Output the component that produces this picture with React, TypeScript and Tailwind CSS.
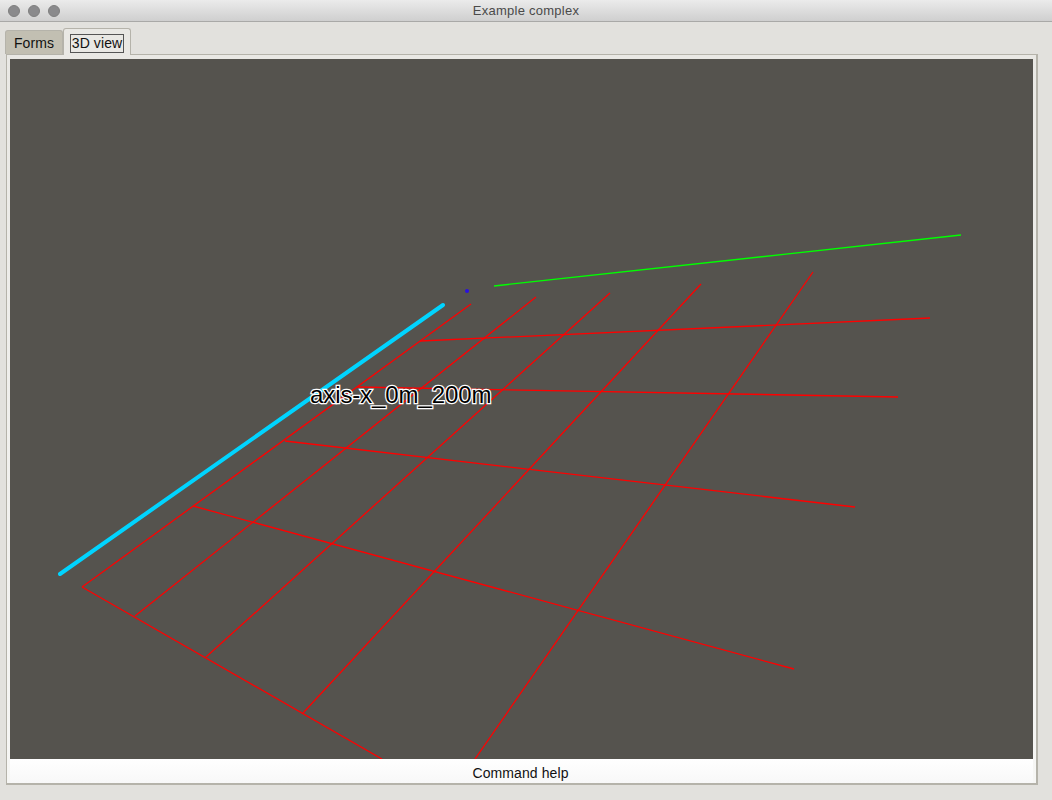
const redLines = [
  // long edges
  "M82 587 L471 304",
  "M135 616 L536 297",
  "M206 657 L610 293",
  "M303 713 L701 284",
  "M475 759 L813 272",
  // cross lines
  "M82 587 L382 759",
  "M193 506 L794 669",
  "M285 441 L855 507",
  "M357 387 L898 397",
  "M420 341 L930 318",
];

function TrafficLight() {
  return <span className="h-3 w-3 rounded-full border border-[#7f7f7f] bg-[#8a8a8c]" />;
}

function Scene() {
  return (
    <div className="relative h-[700px] bg-[#55534e]">
      <svg className="block h-full w-full" viewBox="10 59 1023 700" fill="none">
        {redLines.map((d) => (
          <path key={d} d={d} stroke="#ff0000" strokeWidth="1.3" />
        ))}
        <path d="M494 286 L961 235" stroke="#00ff00" strokeWidth="1.3" />
        <path d="M60 574 L443 305" stroke="#00d4ff" strokeWidth="4" strokeLinecap="round" />
        <circle cx="467" cy="291" r="2" fill="#2a10e0" />
      </svg>
      <span className="absolute left-[300px] top-[322px] font-['Liberation_Sans',Arial,sans-serif] text-[24px] leading-[28px] tracking-[-0.1px] text-black [-webkit-text-stroke:2.5px_white] [paint-order:stroke_fill]">
        axis-x_0m_200m
      </span>
    </div>
  );
}

export default function App() {
  return (
    <div className="flex h-[800px] w-[1052px] flex-col overflow-hidden bg-[#e2e1dd] font-['Liberation_Sans',Arial,sans-serif] text-[14px] tracking-[0.1px] text-[#111]">
      <header className="relative flex h-[22px] shrink-0 items-center border-b border-[#a9a9a7] bg-gradient-to-b from-[#ebebeb] to-[#cfcfcf] pl-2">
        <div className="flex gap-2">
          <TrafficLight />
          <TrafficLight />
          <TrafficLight />
        </div>
        <span className="absolute inset-x-0 text-center text-[13px] tracking-[0.25px] text-[#4a4a4a]">Example complex</span>
      </header>

      <div className="flex flex-1 flex-col px-[5px] pt-[6px]">
        <div className="relative z-10 flex h-[26px] items-end">
          <div className="flex h-[24px] w-[58px] items-center justify-center rounded-t-[3px] border border-b-0 border-[#b5b3aa] bg-[#c2bfb2] pt-[2px]">
            Forms
          </div>
          <div className="-mb-px flex h-[27px] w-[68px] items-center justify-center rounded-t-[3px] border border-b-0 border-[#b5b3aa] bg-[#e9e8e4] pt-[2px]">
            <span className="border border-[#555] px-px leading-[17px]">3D view</span>
          </div>
        </div>
        <div className="ml-px mr-[9px] flex h-[731px] flex-col border-t border-r-2 border-b-2 border-l border-[#b5b3aa] bg-gradient-to-b from-[#e9e8e4] to-[#f6f6f4] pt-1 pr-[3px] pl-[3px]">
          <Scene />
          <div className="flex h-[24px] items-center justify-center bg-gradient-to-b from-white to-[#f8f8f8] pt-[5px] pr-[2px]">
            Command help
          </div>
        </div>
      </div>
    </div>
  );
}
